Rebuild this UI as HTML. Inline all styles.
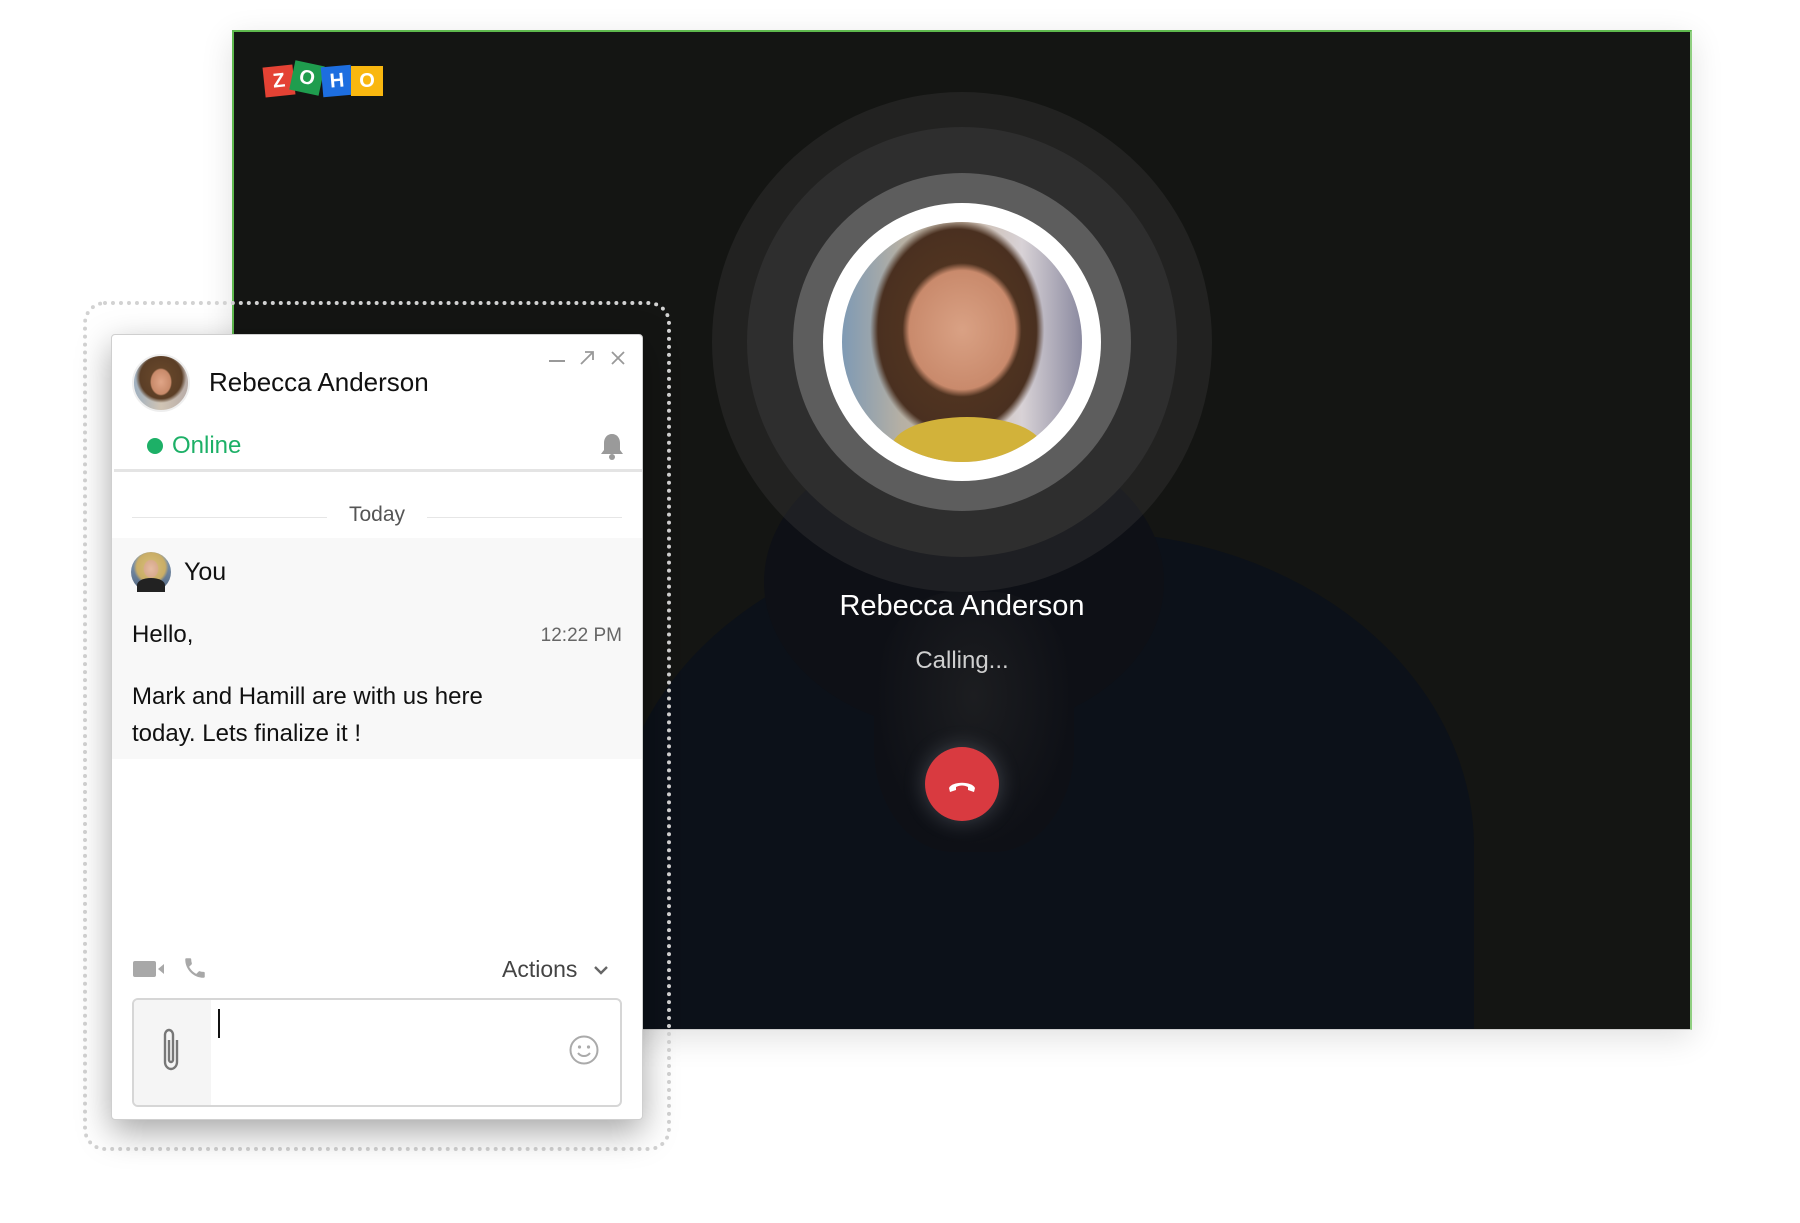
<!DOCTYPE html>
<html><head><meta charset="utf-8"><style>
*{margin:0;padding:0;box-sizing:border-box}
body{width:1800px;height:1223px;background:#fff;position:relative;overflow:hidden;font-family:"Liberation Sans",sans-serif}
.abs{position:absolute}
#dark{left:232px;top:30px;width:1460px;height:1000px;border:2px solid #5fb94e;border-bottom:1px solid #cfcfcf;border-right:2px solid #8fcf80;background:#141513;overflow:hidden;box-shadow:0 8px 30px rgba(0,0,0,.12)}
.ring{position:absolute;border-radius:50%}
.txtc{position:absolute;width:400px;text-align:center;left:762px}
#dots{left:83px;top:301px;width:588px;height:850px;border:4px dotted #d2d2d2;border-radius:22px}
#card{left:111px;top:334px;width:532px;height:786px;background:#fff;border:1px solid #cfcfcf;border-radius:4px;box-shadow:0 12px 34px rgba(0,0,0,.35)}
</style></head><body>

<div id="dark" class="abs">
  <div class="abs" style="left:380px;top:500px;width:860px;height:700px;border-radius:45% 45% 0 0;background:#0c1119"></div>
  <div class="abs" style="left:530px;top:400px;width:400px;height:300px;border-radius:50%;background:#0e1016"></div>
  <div class="abs" style="left:640px;top:560px;width:200px;height:260px;border-radius:40%;background:radial-gradient(ellipse at 50% 40%,#1c1d20,#0e1016 70%)"></div>
  <div class="abs" style="left:30px;top:30px;height:40px;width:130px">
    <div class="abs" style="left:0;top:4px;width:30px;height:30px;background:#e44234;transform:rotate(-6deg);color:#fff;font:bold 20px 'Liberation Sans';text-align:center;line-height:30px">Z</div>
    <div class="abs" style="left:28px;top:1px;width:30px;height:30px;background:#1f9d4e;transform:rotate(12deg);color:#fff;font:bold 20px 'Liberation Sans';text-align:center;line-height:30px">O</div>
    <div class="abs" style="left:58px;top:4px;width:30px;height:30px;background:#1d6ee0;transform:rotate(-5deg);color:#fff;font:bold 20px 'Liberation Sans';text-align:center;line-height:30px">H</div>
    <div class="abs" style="left:87px;top:4px;width:32px;height:30px;background:#f9b70f;color:#fff;font:bold 20px 'Liberation Sans';text-align:center;line-height:30px">O</div>
  </div>
</div>

<div class="ring" style="left:712px;top:92px;width:500px;height:500px;background:rgba(60,60,60,.35)"></div>
<div class="ring" style="left:747px;top:127px;width:430px;height:430px;background:#2e2e2e"></div>
<div class="ring" style="left:793px;top:173px;width:338px;height:338px;background:#5d5d5d"></div>
<div class="ring" style="left:823px;top:203px;width:278px;height:278px;background:#fff"></div>
<div class="ring" style="left:842px;top:222px;width:240px;height:240px;overflow:hidden;background:radial-gradient(ellipse 40% 45% at 50% 45%,#d9a184 0,#c98a6c 55%,transparent 62%),radial-gradient(ellipse 55% 70% at 48% 45%,#5a3a22 0,#4a3020 60%,transparent 66%),linear-gradient(90deg,#7f9ab4 0,#b6b0a4 25%,#c9b8a6 50%,#d8d2d6 75%,#8b8aa0 100%)">
  <div class="abs" style="left:50px;top:195px;width:150px;height:60px;border-radius:50%;background:#d2b23a"></div>
</div>
<div class="txtc" style="top:590px;font-size:29px;color:#fff">Rebecca Anderson</div>
<div class="txtc" style="top:647px;font-size:24px;color:#cfcfcf">Calling...</div>
<div class="ring" style="left:925px;top:747px;width:74px;height:74px;background:#d93a40;box-shadow:0 0 22px rgba(200,210,230,.25)">
  <svg width="74" height="74" viewBox="0 0 74 74"><path d="M24 41c3-7 23-7 26 0l-1 4-6-2 0-3c-4-2-8-2-12 0l0 3-6 2z" fill="#fff"/></svg>
</div>

<div id="dots" class="abs"></div>

<div id="card" class="abs">
  <div class="abs" style="left:20px;top:19px;width:58px;height:58px;border-radius:50%;border:2px solid #eee;background:radial-gradient(ellipse 30% 38% at 50% 48%,#e0a587 0,#c88a6a 60%,transparent 68%),radial-gradient(circle at 50% 40%,#6b4a2c 0,#5b3e26 50%,transparent 60%),linear-gradient(90deg,#9fb0c0,#d0c4b4,#b8aca8)"></div>
  <div class="abs" style="left:97px;top:-1px;line-height:96px;font-size:26px;color:#111">Rebecca Anderson</div>
  <div class="abs" style="left:437px;top:25px;width:16px;height:2px;background:#999"></div>
  <svg class="abs" style="left:467px;top:15px" width="16" height="16" viewBox="0 0 16 16"><path d="M2 14L14 2M6 2h8v8" stroke="#999" stroke-width="1.8" fill="none"/></svg>
  <svg class="abs" style="left:498px;top:15px" width="16" height="16" viewBox="0 0 16 16"><path d="M2 2l12 12M14 2L2 14" stroke="#999" stroke-width="1.8"/></svg>
  <div class="abs" style="left:35px;top:103px;width:16px;height:16px;border-radius:50%;background:#1db067"></div>
  <div class="abs" style="left:60px;top:96px;font-size:24px;line-height:30px;color:#1db067">Online</div>
  <svg class="abs" style="left:487px;top:97px" width="26" height="30" viewBox="0 0 26 30"><path d="M13 2c-5 0-8 4-8 9v7l-3 4h22l-3-4v-7c0-5-3-9-8-9z" fill="#9a9a9a"/><circle cx="13" cy="25" r="3" fill="#9a9a9a"/></svg>
  <div class="abs" style="left:2px;top:134px;width:528px;height:3px;background:#e4e4e4"></div>
  <div class="abs" style="left:20px;top:182px;width:195px;height:1px;background:#e6e6e6"></div>
  <div class="abs" style="left:315px;top:182px;width:195px;height:1px;background:#e6e6e6"></div>
  <div class="abs" style="left:0;width:530px;top:167px;text-align:center;font-size:21px;color:#555;line-height:26px">Today</div>
  <div class="abs" style="left:0;top:203px;width:530px;height:221px;background:#f8f8f8"></div>
  <div class="abs" style="left:19px;top:217px;width:40px;height:40px;border-radius:50%;background:radial-gradient(ellipse 28% 34% at 50% 42%,#e5bca2 0,#d9ab8f 60%,transparent 70%),radial-gradient(circle at 50% 38%,#d8c07a 0,#c9ad66 45%,transparent 55%),linear-gradient(#8aa0b8,#506580)"><div class="abs" style="left:6px;top:26px;width:28px;height:14px;border-radius:50% 50% 0 0;background:#222"></div></div>
  <div class="abs" style="left:72px;top:222px;font-size:25px;line-height:30px;color:#111">You</div>
  <div class="abs" style="left:20px;top:285px;font-size:24px;line-height:30px;color:#111">Hello,</div>
  <div class="abs" style="right:20px;top:287px;font-size:19px;line-height:28px;color:#666">12:22 PM</div>
  <div class="abs" style="left:20px;top:343px;font-size:24px;line-height:37px;color:#111;width:405px">Mark and Hamill are with us here today. Lets finalize it !</div>
  <svg class="abs" style="left:20px;top:623px" width="34" height="22" viewBox="0 0 34 22"><rect x="1" y="3" width="23" height="16" rx="2" fill="#a8a8a8"/><path d="M26 11l6-5v10z" fill="#a8a8a8"/></svg>
  <svg class="abs" style="left:70px;top:620px" width="26" height="26" viewBox="0 0 24 24"><path d="M6.6 10.8c1.4 2.8 3.8 5.1 6.6 6.6l2.2-2.2c.3-.3.7-.4 1-.2 1.1.4 2.3.6 3.6.6.6 0 1 .4 1 1V20c0 .6-.4 1-1 1C10.6 21 3 13.4 3 4c0-.6.4-1 1-1h3.5c.6 0 1 .4 1 1 0 1.3.2 2.5.6 3.6.1.3 0 .7-.2 1z" fill="#a8a8a8"/></svg>
  <div class="abs" style="left:390px;top:620px;font-size:23px;line-height:28px;color:#444">Actions</div>
  <svg class="abs" style="left:481px;top:629px" width="16" height="12" viewBox="0 0 16 12"><path d="M2 3l6 6 6-6" stroke="#666" stroke-width="2.4" fill="none"/></svg>
  <div class="abs" style="left:20px;top:663px;width:490px;height:109px;border:2px solid #d6d6d6;border-radius:6px;overflow:hidden;background:#fff">
    <div class="abs" style="left:0;top:0;width:77px;height:105px;background:#f5f5f5"></div>
    <svg class="abs" style="left:22px;top:26px" width="30" height="50" viewBox="0 0 30 50"><path d="M21 14v22c0 4-3 7-6 7s-6-3-6-7V9c0-3 2-5 4-5s4 2 4 5v25c0 1-1 2-2 2s-2-1-2-2V14" fill="none" stroke="#777" stroke-width="2.4"/></svg>
    <div class="abs" style="left:84px;top:9px;width:2px;height:29px;background:#111"></div>
    <svg class="abs" style="left:434px;top:34px" width="32" height="32" viewBox="0 0 32 32"><circle cx="16" cy="16" r="13.5" fill="none" stroke="#aaa" stroke-width="2"/><circle cx="11.5" cy="13" r="1.6" fill="#aaa"/><circle cx="20.5" cy="13" r="1.6" fill="#aaa"/><path d="M10 19c3 4 9 4 12 0" fill="none" stroke="#aaa" stroke-width="2"/></svg>
  </div>
</div>
</body></html>
